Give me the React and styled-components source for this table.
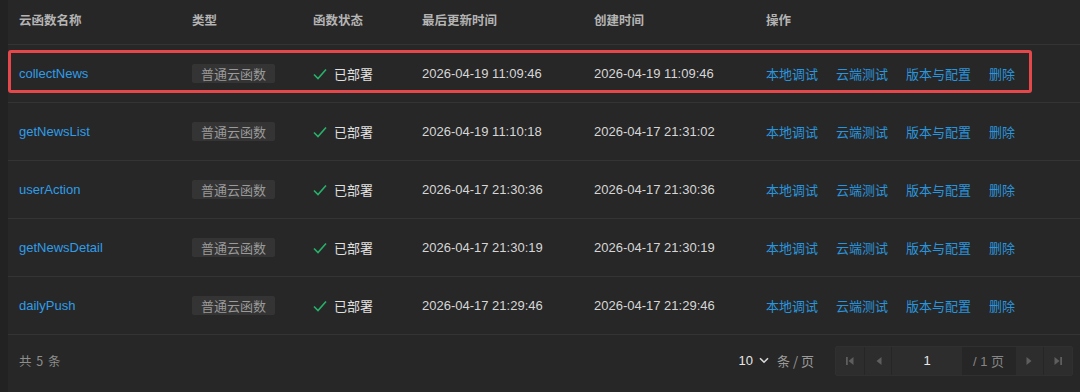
import React from "react";
import styled, { createGlobalStyle, css } from "styled-components";

// ==============================
// =====  Styled Component  =====
// ==============================

const Global = createGlobalStyle`
  html, body {
    margin: 0;
    padding: 0;
    background: #222222;
    font-family: "Liberation Sans", "Noto Sans CJK SC", sans-serif;
    font-size: 13px;
  }
`;

const Panel = styled.div`
  margin-left: 8px;
  width: 1072px;
  height: 392px;
  background: #272727;
  display: flex;
  flex-direction: column;
`;

const COLS = "173px 121px 109px 172px 172px 1fr";

const HeadRow = styled.div`
  display: grid;
  grid-template-columns: ${COLS};
  align-items: center;
  height: 39px;
  padding: 0 0 5px 11px;
  border-bottom: 1px solid #343434;
  color: #b4b4b4;
  font-weight: 700;
  font-family: "Noto Sans CJK SC", sans-serif;
  font-size: 12.5px;
`;

const Row = styled.div`
  position: relative;
  display: grid;
  grid-template-columns: ${COLS};
  align-items: center;
  height: 57px;
  padding-left: 11px;
  border-bottom: 1px solid #343434;

  ${props =>
    props.$marked &&
    css`
      &::after {
        content: "";
        position: absolute;
        left: 0;
        top: 5px;
        width: 1024px;
        height: 43px;
        border: 3px solid #e5484a;
        border-radius: 3px;
        box-sizing: border-box;
        pointer-events: none;
      }
    `}
`;

const Name = styled.span`
  color: #2f9de8;
  font-size: 13px;
`;

const Tag = styled.span`
  justify-self: start;
  background: #343434;
  color: #9a9a9a;
  font-family: "Noto Sans CJK SC", sans-serif;
  font-size: 13px;
  line-height: 17px;
  padding: 1px 9px 1px;
  border-radius: 2px;
`;

const Status = styled.span`
  display: flex;
  align-items: center;
  gap: 7px;
  color: #e0e0e0;
  font-family: "Noto Sans CJK SC", sans-serif;
  font-size: 13px;
`;

const Time = styled.span`
  color: #d6d6d6;
  font-size: 13px;
`;

const Actions = styled.div`
  display: flex;
  gap: 18px;
`;

const ActionLink = styled.a`
  color: #2a95dd;
  font-family: "Noto Sans CJK SC", sans-serif;
  font-size: 13px;
  cursor: pointer;
`;

const Footer = styled.div`
  flex: 1;
  display: flex;
  align-items: center;
  justify-content: space-between;
  padding: 0 7px 6px 11px;
`;

const Total = styled.span`
  color: #8e8e8e;
  font-family: "Noto Sans CJK SC", sans-serif;
  font-size: 12.5px;
  letter-spacing: 1px;
`;

const Paging = styled.div`
  display: flex;
  align-items: center;
`;

const PageSize = styled.div`
  display: flex;
  align-items: center;
  gap: 6px;
  margin-right: 21px;
  color: #e6e6e6;
  font-size: 13px;
`;

const PageUnit = styled.span`
  color: #9a9a9a;
  font-family: "Noto Sans CJK SC", sans-serif;
  margin-left: 2px;
`;

const Pager = styled.div`
  display: flex;
  height: 28px;
  background: #2d2d2d;
  border: 1px solid #303030;
  border-radius: 2px;
`;

const PagerBtn = styled.div`
  width: ${props => props.$w || 27}px;
  display: flex;
  align-items: center;
  justify-content: center;
  border-right: 1px solid #262626;

  &:last-child {
    border-right: none;
  }
`;

const PageInput = styled.div`
  width: 70px;
  display: flex;
  align-items: center;
  justify-content: center;
  color: #e8e8e8;
  font-size: 13px;
`;

const PageTotal = styled.div`
  width: 53px;
  display: flex;
  align-items: center;
  justify-content: center;
  background: #262626;
  color: #858585;
  font-family: "Liberation Sans", "Noto Sans CJK SC", sans-serif;
  font-size: 13px;
  border-right: 1px solid #262626;
`;

// ==============================
// =====      Component     =====
// ==============================

const rows = [
  { name: "collectNews", updated: "2026-04-19 11:09:46", created: "2026-04-19 11:09:46" },
  { name: "getNewsList", updated: "2026-04-19 11:10:18", created: "2026-04-17 21:31:02" },
  { name: "userAction", updated: "2026-04-17 21:30:36", created: "2026-04-17 21:30:36" },
  { name: "getNewsDetail", updated: "2026-04-17 21:30:19", created: "2026-04-17 21:30:19" },
  { name: "dailyPush", updated: "2026-04-17 21:29:46", created: "2026-04-17 21:29:46" },
];

const Check = () => (
  <svg width="14" height="12" viewBox="0 0 14 12" fill="none">
    <path d="M1 6.5 L5 10.5 L13 1.5" stroke="#27b26b" strokeWidth="1.6" />
  </svg>
);

const Chevron = () => (
  <svg width="10" height="7" viewBox="0 0 10 7" fill="none">
    <path d="M1 1.2 L5 5.2 L9 1.2" stroke="#d8d8d8" strokeWidth="1.6" />
  </svg>
);

const Tri = ({ dir, bar }) => (
  <svg width="10" height="10" viewBox="0 0 10 10">
    {dir === "left" ? (
      <>
        {bar && <rect x="1" y="1" width="1.8" height="8" fill="#5e5e5e" />}
        <path d="M8.5 1 L3.5 5 L8.5 9 Z" fill="#5e5e5e" />
      </>
    ) : (
      <>
        <path d="M1.5 1 L6.5 5 L1.5 9 Z" fill="#5e5e5e" />
        {bar && <rect x="7.2" y="1" width="1.8" height="8" fill="#5e5e5e" />}
      </>
    )}
  </svg>
);

export default function App() {
  return (
    <>
      <Global />
      <Panel>
        <HeadRow>
          <span>云函数名称</span>
          <span>类型</span>
          <span>函数状态</span>
          <span>最后更新时间</span>
          <span>创建时间</span>
          <span>操作</span>
        </HeadRow>
        {rows.map((r, i) => (
          <Row key={r.name} $marked={i === 0}>
            <Name>{r.name}</Name>
            <Tag>普通云函数</Tag>
            <Status>
              <Check />
              已部署
            </Status>
            <Time>{r.updated}</Time>
            <Time>{r.created}</Time>
            <Actions>
              <ActionLink>本地调试</ActionLink>
              <ActionLink>云端测试</ActionLink>
              <ActionLink>版本与配置</ActionLink>
              <ActionLink>删除</ActionLink>
            </Actions>
          </Row>
        ))}
        <Footer>
          <Total>共 5 条</Total>
          <Paging>
            <PageSize>
              10 <Chevron />
              <PageUnit>条 / 页</PageUnit>
            </PageSize>
            <Pager>
              <PagerBtn $w={28}>
                <Tri dir="left" bar />
              </PagerBtn>
              <PagerBtn $w={26}>
                <Tri dir="left" />
              </PagerBtn>
              <PageInput>1</PageInput>
              <PageTotal>/ 1 页</PageTotal>
              <PagerBtn $w={27}>
                <Tri dir="right" />
              </PagerBtn>
              <PagerBtn $w={28}>
                <Tri dir="right" bar />
              </PagerBtn>
            </Pager>
          </Paging>
        </Footer>
      </Panel>
    </>
  );
}
